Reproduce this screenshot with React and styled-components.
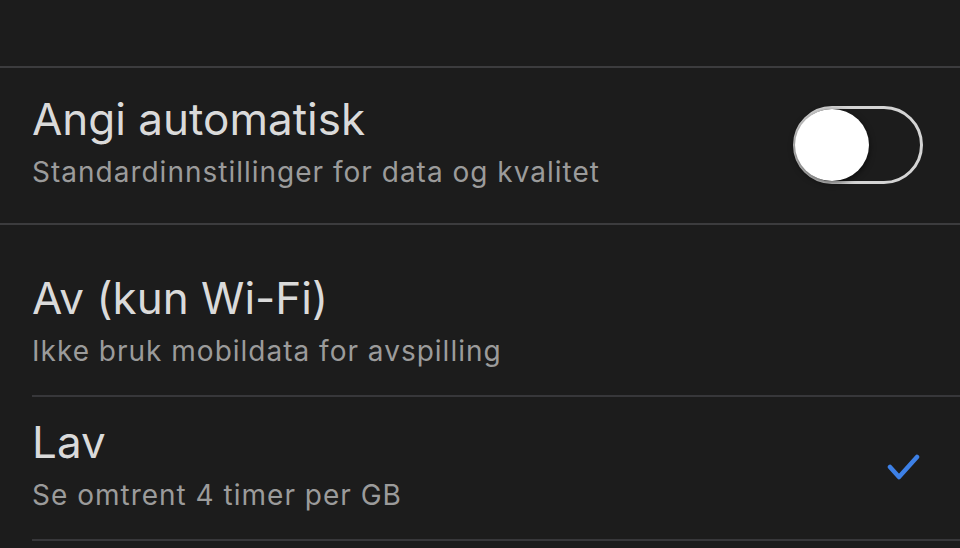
import styled, { createGlobalStyle } from "styled-components";

const GlobalStyle = createGlobalStyle`
  html, body {
    margin: 0;
    padding: 0;
    background: #1c1c1c;
  }
  body {
    font-family: "Inter", "Noto Sans", sans-serif;
    -webkit-font-smoothing: antialiased;
  }
`;

const Screen = styled.div`
  width: 960px;
  height: 548px;
  overflow: hidden;
  background: #1c1c1c;
  padding-top: 66px;
  box-sizing: border-box;
`;

const Section = styled.div`
  border-top: ${(p) => (p.$top ? "2px solid #3c3c3e" : "none")};
  border-bottom: ${(p) => (p.$bottom ? "2px solid #3c3c3e" : "none")};
  padding-top: ${(p) => p.$gap || 0}px;
`;

const Row = styled.div`
  display: flex;
  align-items: center;
  justify-content: space-between;
  height: ${(p) => p.$height}px;
  margin-left: ${(p) => (p.$inset ? "32px" : "0")};
  padding: 0 ${(p) => p.$right || 37}px 6px ${(p) => (p.$inset ? "0" : "32px")};
  border-bottom: ${(p) => (p.$divider ? "2px solid #37373a" : "none")};
  box-sizing: border-box;
`;

const Texts = styled.div`
  display: flex;
  flex-direction: column;
`;

const Title = styled.div`
  font-size: 44px;
  line-height: 52px;
  color: #dadada;
  letter-spacing: 0;
`;

const Subtitle = styled.div`
  margin-top: 7px;
  font-size: 28px;
  line-height: 40px;
  color: #9b9b9b;
  letter-spacing: 1px;
`;

const Toggle = styled.div`
  position: relative;
  width: 130px;
  height: 78px;
  margin-top: 4px;
  border-radius: 39px;
  border: 3px solid #d4d4d4;
  box-sizing: border-box;
  background: #1c1c1c;
`;

const Knob = styled.div`
  position: absolute;
  left: -1px;
  top: 0px;
  width: 74px;
  height: 72px;
  border-radius: 50%;
  background: #ffffff;
  box-shadow: 0 2px 6px rgba(0, 0, 0, 0.6);
`;

const Check = () => (
  <svg width="34" height="28" viewBox="0 0 34 28" style={{ marginTop: 4 }}>
    <path
      d="M4 14 L13 24 L31 4"
      fill="none"
      stroke="#3d80e6"
      strokeWidth="4.5"
      strokeLinecap="round"
      strokeLinejoin="round"
    />
  </svg>
);

export default function App() {
  return (
    <Screen>
      <GlobalStyle />
      <Section $top $bottom>
        <Row $height={155}>
          <Texts>
            <Title>Angi automatisk</Title>
            <Subtitle>Standardinnstillinger for data og kvalitet</Subtitle>
          </Texts>
          <Toggle>
            <Knob />
          </Toggle>
        </Row>
      </Section>
      <Section $gap={28}>
        <Row $height={144} $inset $divider>
          <Texts>
            <Title>Av (kun Wi-Fi)</Title>
            <Subtitle>Ikke bruk mobildata for avspilling</Subtitle>
          </Texts>
        </Row>
        <Row $height={144} $inset $divider $right={40}>
          <Texts>
            <Title>Lav</Title>
            <Subtitle>Se omtrent 4 timer per GB</Subtitle>
          </Texts>
          <Check />
        </Row>
      </Section>
    </Screen>
  );
}
